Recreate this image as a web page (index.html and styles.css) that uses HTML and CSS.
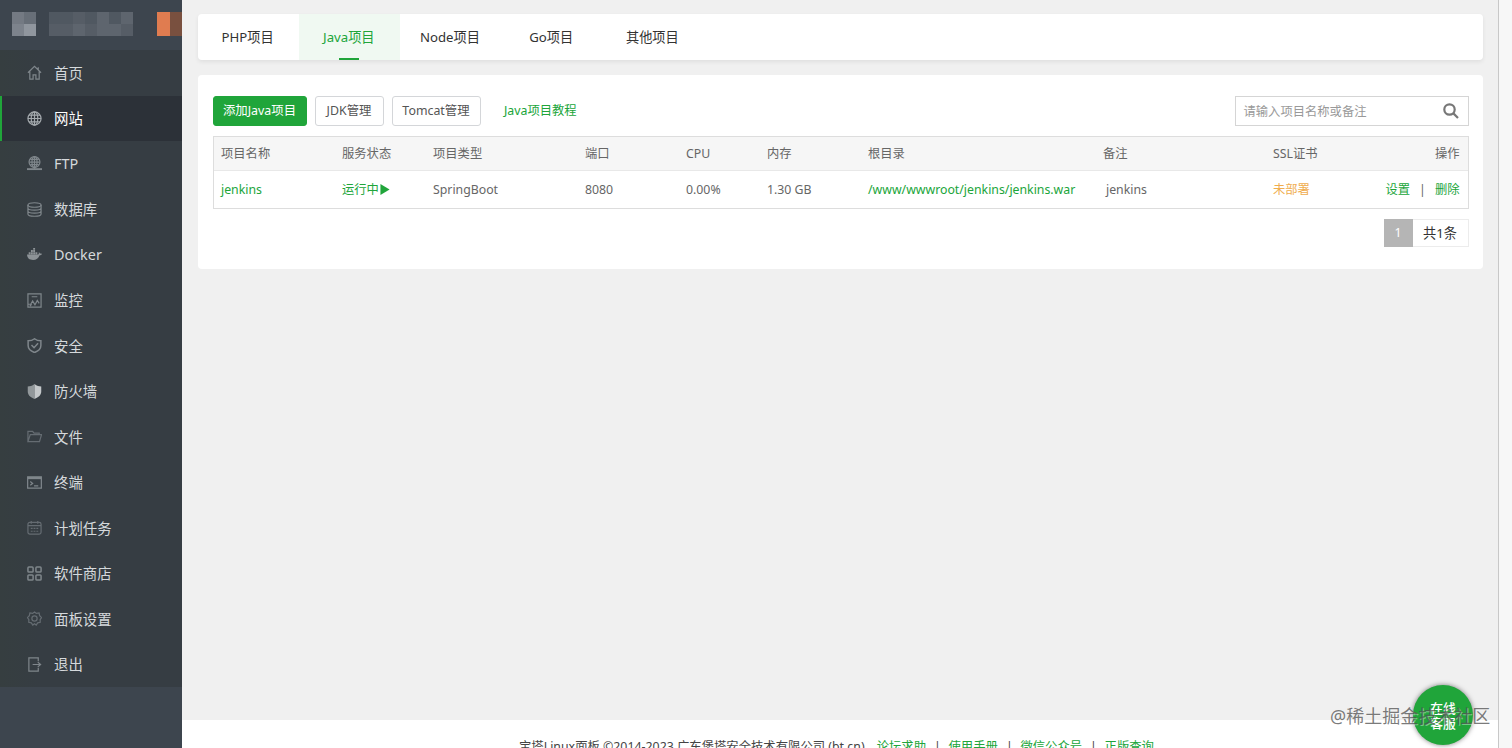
FILE: index.html
```html
<!DOCTYPE html>
<html lang="zh-CN">

<head>
  <meta charset="UTF-8">
  <meta name="viewport" content="width=device-width, initial-scale=1">
  <title>宝塔Linux面板</title>
  <link rel="stylesheet" href="styles.css">
</head>

<body>
  <div class="sidebar">
    <div class="account">
      <div class="mosaic logo"><i class="m1"></i><i class="m2"></i><i class="m3"></i><i class="m4"></i></div>
      <div class="mosaic ip">
        <i></i><i></i><i class="m5"></i><i></i><i class="m6"></i><i></i><i class="m6"></i>
        <i class="m5"></i><i class="m5"></i><i class="m6"></i><i class="m5"></i><i class="m6"></i><i class="m6"></i><i class="m5"></i>
      </div>
      <div class="msg"></div>
    </div>
    <ul class="menu">
      <li><svg viewBox="0 0 16 16"><path d="M1 8.3 8 1.500l7 6.800M3 7v8h3.500v-4.500h3V15H13V7M12 5V2.500"/></svg><span>首页</span></li>
      <li class="active"><svg viewBox="0 0 16 16"><circle cx="8" cy="8" r="7"/><ellipse cx="8" cy="8" rx="3.500" ry="7"/><path d="M8 1v14M1 8h14M2 4.500h12M2 11.500h12"/></svg><span>网站</span></li>
      <li><svg viewBox="0 0 16 16"><circle cx="8" cy="6.500" r="5.800"/><ellipse cx="8" cy="6.500" rx="2.700" ry="5.800"/><path d="M8 1v13M2.500 6.500h11M3.500 3.700h9M3.500 9.300h9"/><path d="M0 14h16" stroke-width="2"/></svg><span class="latin">FTP</span></li>
      <li><svg viewBox="0 0 16 16"><ellipse cx="8" cy="3.200" rx="7" ry="2.400"/><path d="M1 3.200v9.600c0 3.200 14 3.200 14 0V3.200M1 6.500c0 3 14 3 14 0M1 9.700c0 3 14 3 14 0"/></svg><span>数据库</span></li>
      <li><svg class="fill" viewBox="0 0 16 16"><path d="M0 8h11.400c1 0 1.500-.8 1.100-2.500.8.300 1.200.9 1.300 1.500.8-.1 1.600 0 2.200.4-.5 1-1.400 1.400-2.500 1.400-1.300 3.500-3.600 5-7 5C2.500 13.800.3 12 0 8zM1.800 5.600h2v2h-2zM4.200 5.600h2v2h-2zM6.600 5.600h2v2h-2zM9 5.600h2v2H9zM4.200 3.200h2v2h-2zM6.600 3.200h2v2h-2zM6.600 1h2v1.900h-2z"/></svg><span class="latin">Docker</span></li>
      <li><svg viewBox="0 0 16 16"><path d="M1 1h14v14H1zM5 4h6M1 12h3l2-3.500 2.500 4L11 8l2 3M3 14l2-2"/></svg><span>监控</span></li>
      <li><svg viewBox="0 0 16 16"><path d="M8 .8C6 2.400 3.500 3 1.200 3v5c0 3.500 2.800 6 6.800 7.500 4-1.500 6.800-4 6.800-7.500V3C12.500 3 10 2.400 8 .8zM4.800 7.500l2.700 2.800 4.300-4.800" stroke-width="1.600"/></svg><span>安全</span></li>
      <li><svg class="wall" viewBox="0 0 16 16"><path class="dark" d="M8 0C5.500 2 3 2.600.8 2.600V8c0 3.600 2.800 6.200 7.200 8z"/><path d="M8 0c2.500 2 5 2.600 7.200 2.600V8c0 3.600-2.800 6.200-7.200 8z"/></svg><span>防火墙</span></li>
      <li class="dim"><svg viewBox="0 0 16 16"><path d="M1 13.500v-11h5l1.500 2H13V6M1 13.500 3.500 6h12l-2.200 7.500z"/></svg><span>文件</span></li>
      <li><svg viewBox="0 0 16 16"><path d="M.7 2h14.600v12H.7z"/><path d="M.7 3.200h14.600" stroke-width="2.500"/><path d="m3.500 7 2.500 2-2.500 2M7.500 11.500H12"/></svg><span>终端</span></li>
      <li class="dim"><svg viewBox="0 0 16 16"><rect x="1" y="2.500" width="14" height="12.500" rx="2"/><path d="M1 6h14M4.500 1v3M11.500 1v3"/><path d="M4 9h8M4 12h8" stroke-dasharray="2 1"/></svg><span>计划任务</span></li>
      <li><svg class="apps" viewBox="0 0 16 16"><rect x="1" y="1" width="5.500" height="5.500" rx="1"/><rect x="9.500" y="1" width="5.500" height="5.500" rx="1"/><rect x="1" y="9.500" width="5.500" height="5.500" rx="1"/><rect x="9.500" y="9.500" width="5.500" height="5.500" rx="1"/></svg><span>软件商店</span></li>
      <li class="dim"><svg viewBox="0 0 16 16"><path d="m8 1 2 1.600 2.900-.5.600 2.800L15.500 7 14 9.300l.1 2.700-2.700.6L9.800 15 8 13.700 6.200 15l-1.600-2.400-2.700-.6.1-2.700L.5 7l2-2.100.6-2.800 2.900.5z"/><circle cx="8" cy="8" r="2.800"/></svg><span>面板设置</span></li>
      <li><svg viewBox="0 0 16 16"><path d="M12 4.500V1H2v14h10v-3.500M6 8h8M11.500 5.500 14.500 8l-3 2.500"/></svg><span>退出</span></li>
    </ul>
  </div>

  <div class="page">
    <main>
      <div class="tabs">
        <span>PHP项目</span>
        <span class="on">Java项目</span>
        <span>Node项目</span>
        <span>Go项目</span>
        <span>其他项目</span>
      </div>

      <div class="panel">
        <div class="toolbar">
          <button class="btn green">添加Java项目</button>
          <button class="btn jdk">JDK管理</button>
          <button class="btn tomcat">Tomcat管理</button>
          <a class="course">Java项目教程</a>
          <div class="search">
            <span>请输入项目名称或备注</span>
            <svg viewBox="0 0 16 16"><circle cx="6.500" cy="6.500" r="5.200"/><path d="m10.400 10.400 4.600 4.600"/></svg>
          </div>
        </div>

        <table>
          <colgroup>
            <col class="c1"><col class="c2"><col class="c3"><col class="c4"><col class="c5"><col class="c6"><col class="c7"><col class="c8"><col>
            <col class="c10">
          </colgroup>
          <tr>
            <th>项目名称</th>
            <th>服务状态</th>
            <th>项目类型</th>
            <th>端口</th>
            <th>CPU</th>
            <th>内存</th>
            <th>根目录</th>
            <th>备注</th>
            <th>SSL证书</th>
            <th class="right">操作</th>
          </tr>
          <tr>
            <td><a>jenkins</a></td>
            <td><a class="state">运行中<svg viewBox="0 0 10 12"><path d="M0 0l10 6-10 6z"/></svg></a></td>
            <td>SpringBoot</td>
            <td>8080</td>
            <td>0.00%</td>
            <td>1.30 GB</td>
            <td><a>/www/wwwroot/jenkins/jenkins.war</a></td>
            <td class="note">jenkins</td>
            <td class="warn">未部署</td>
            <td class="right"><a>设置</a><i class="bar">|</i><a>删除</a></td>
          </tr>
        </table>

        <div class="pager">
          <span class="cur">1</span>
          <span class="total">共1条</span>
        </div>
      </div>
    </main>

    <footer>
      <span class="copy">宝塔Linux面板 ©2014-2023 广东堡塔安全技术有限公司 (bt.cn)</span>
      <a>论坛求助</a><i>|</i><a>使用手册</a><i>|</i><a>微信公众号</a><i>|</i><a>正版查询</a>
    </footer>
  </div>
  <div class="gutter"></div>

  <div class="service">在线<br>客服</div>
  <div class="watermark">@稀土掘金技术社区</div>
</body>

</html>
```
FILE: styles.css
```css
*{
  box-sizing: border-box;
  margin: 0;
  padding: 0;
}

body{
  display: flex;
  height: 748px;
  overflow: hidden;
  position: relative;
  background: #f0f0f0;
  color: #666;
  font-family: "Noto Sans", "Noto Sans CJK SC", sans-serif;
  font-size: 12.3px;
}
a{
  color: #20a53a;
}
i{
  font-style: normal;
}

/* sidebar */
.sidebar{
  width: 182px;
  flex: none;
  background: #3d454e;
}
.account{
  height: 50px;
  padding-top: 12px;
  padding-left: 12px;
  display: flex;
}
.mosaic{
  display: grid;
  height: 24px;
  grid-auto-rows: 12px;
}
.mosaic i{
  background: #505861;
}
.logo{
  grid-template-columns: 12px 12px;
}
.ip{
  grid-template-columns: repeat(7, 12px);
  margin-left: 13px;
}
.mosaic .m1{ background: #747a83; }
.mosaic .m2{ background: #686f78; }
.mosaic .m3{ background: #7d838c; }
.mosaic .m4{ background: #90969e; }
.mosaic .m5{ background: #565d66; }
.mosaic .m6{ background: #5e656e; }
.msg{
  width: 25px;
  height: 24px;
  margin-left: 24px;
  background: linear-gradient(90deg, #e07c50 13px, #79503f 13px);
}
.menu{
  list-style: none;
  background: linear-gradient(90deg, #363e40, #363d43 40px);
}
.menu li{
  height: 45.5px;
  display: flex;
  align-items: center;
  padding-left: 27px;
  color: #d5d9dc;
  font-size: 14.4px;
}
.menu span{
  padding-bottom: 1px;
}
.menu .latin{
  padding-bottom: 0;
}
.menu svg{
  width: 15px;
  height: 15px;
  margin-right: 12px;
  fill: none;
  stroke: #7f868b;
  stroke-width: 1.3;
}
.menu .apps{
  stroke-width: 1.6;
}
.menu .fill{
  fill: #8d9397;
  stroke: none;
}
.menu .wall{
  fill: #c4c8ca;
  stroke: none;
}
.wall .dark{
  fill: #92989b;
}
.menu .dim svg{
  stroke: #656c72;
}
.menu .active{
  background: #2c3138;
  color: #fff;
  border-left: 2px solid #20a53a;
  padding-left: 25px;
}
.menu .active svg{
  stroke: #a4a9ad;
}

/* content */
.page{
  flex: 1;
  background: #fff;
}
main{
  height: 720px;
  padding: 14px 15px 0 16px;
  background: #f0f0f0;
}
.tabs{
  display: flex;
  height: 46px;
  background: #fff;
  border-radius: 4px;
  box-shadow: 0 2px 4px rgba(0,0,0,.07);
}
.tabs span{
  width: 101.2px;
  padding-right: 2px;
  line-height: 46px;
  text-align: center;
  font-size: 13.2px;
  color: #333;
}
.tabs .on{
  background: #f0f9f2;
  color: #20a53a;
  display: flex;
  flex-direction: column;
  align-items: center;
}
.tabs .on::after{
  content: "";
  width: 20px;
  height: 2px;
  margin-top: -2px;
  background: #20a53a;
}
.panel{
  height: 194px;
  margin-top: 15px;
  padding: 20px 14.500px 0 15px;
  background: #fff;
  border-radius: 4px;
}
.toolbar{
  display: flex;
  align-items: center;
  height: 31px;
}
.btn{
  height: 30px;
  margin-right: 8px;
  padding: 0 1px 1px 0;
  border: 1px solid #d4d6d9;
  border-radius: 3px;
  background: #fff;
  color: #555;
  font-family: inherit;
  font-size: 12.4px;
  white-space: nowrap;
}
.green{
  width: 94px;
  border-color: #20a53a;
  background: #20a53a;
  color: #fff;
}
.jdk{
  width: 69px;
}
.tomcat{
  width: 89px;
}
.course{
  margin-left: 15px;
  padding-bottom: 1px;
}
.search{
  display: flex;
  align-items: center;
  justify-content: space-between;
  width: 234px;
  height: 30px;
  margin-left: auto;
  padding: 0 9px 0 8px;
  border: 1px solid #d5d5d5;
  color: #999;
}
.search svg{
  width: 16px;
  height: 16px;
  fill: none;
  stroke: #777;
  stroke-width: 2.2;
}

table{
  width: 100%;
  margin-top: 10px;
  table-layout: fixed;
  border-collapse: separate;
  border-spacing: 0;
  border: 1px solid #ddd;
}
.c1{ width: 120px; }
.c2{ width: 91px; }
.c3{ width: 152px; }
.c4{ width: 101px; }
.c5{ width: 81px; }
.c6{ width: 101px; }
.c7{ width: 235px; }
.c8{ width: 170px; }
.c10{ width: 100px; }
th, td{
  padding: 0 8px 1px;
  text-align: left;
  font-weight: normal;
  white-space: nowrap;
}
th:first-child, td:first-child{
  padding-left: 7px;
}
th{
  height: 34px;
  background: #f6f6f6;
  border-bottom: 1px solid #e8e8e8;
}
td{
  height: 37px;
}
th.right, td.right{
  text-align: right;
}
td.note{
  padding-left: 11px;
}
.warn{
  color: #f0ad4e;
}
.bar{
  margin: 0 9px;
}
.state svg{
  width: 10px;
  height: 11px;
  margin-left: 1px;
  vertical-align: -1px;
  fill: #20a53a;
}

.pager{
  display: flex;
  justify-content: flex-end;
  margin-top: 10px;
  line-height: 28px;
  color: #333;
}
.cur{
  width: 29px;
  text-align: center;
  background: #b5b5b5;
  color: #fff;
}
.total{
  width: 56px;
  line-height: 26px;
  text-align: center;
  font-size: 13.2px;
  border: 1px solid #ececec;
  border-left: 0;
}

footer{
  display: flex;
  padding-top: 18px;
  padding-left: 337px;
  line-height: 18px;
  color: #444;
  font-size: 12.35px;
  white-space: nowrap;
}
.copy{
  margin-right: 12px;
}
footer i{
  width: 22.5px;
  padding-left: 8px;
}

.gutter{
  flex: 0 0 14px;
  background: #f7f7f7;
  border-left: 1px solid #c8c8c8;
}

/* floating button */
.service{
  position: absolute;
  left: 1413px;
  top: 685px;
  width: 60px;
  height: 60px;
  padding-top: 16px;
  border-radius: 50%;
  background: #20a53a;
  box-shadow: 0 0 5px rgba(0,0,0,.5);
  color: #fff;
  text-align: center;
  font-size: 12.8px;
  font-weight: 500;
  line-height: 15px;
}
.watermark{
  position: absolute;
  left: 1330px;
  top: 704px;
  color: rgba(80,80,80,.75);
  text-shadow: 1px 1px 0 rgba(255,255,255,.4);
  font-size: 18px;
  line-height: 25px;
  white-space: nowrap;
}
```
